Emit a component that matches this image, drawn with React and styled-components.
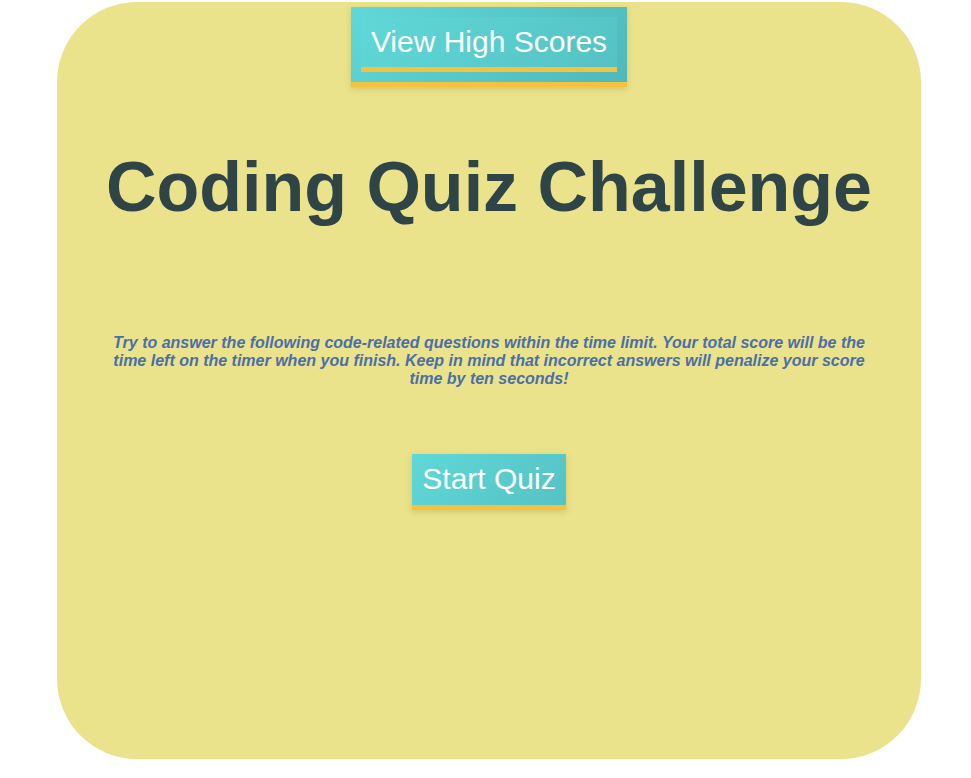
import React from 'react'
import styled, { createGlobalStyle } from 'styled-components'

const GlobalStyle = createGlobalStyle`
  body {
    margin: 0;
    background: #ffffff;
    font-family: "Liberation Sans", Arial, Helvetica, sans-serif;
  }
`

const Card = styled.main`
  width: 864px;
  height: 757px;
  margin: 2px 0 0 57px;
  background: #ebe38b;
  border-radius: 80px;
  display: flex;
  flex-direction: column;
  align-items: center;
  box-sizing: border-box;
  padding-top: 5px;
`

const TealBox = styled.div`
  background: linear-gradient(135deg, #5fd8d8 0%, #4fb8bb 100%);
  border-bottom: 5px solid #f6c13f;
  box-shadow: 0 2px 6px rgba(120, 110, 40, 0.25);
  padding: ${props => props.padding || '0'};
`

const Button = styled.button`
  border: none;
  border-bottom: 5px solid #f6c13f;
  background: linear-gradient(135deg, #5fd8d8 0%, #55c2c4 100%);
  color: #ffffff;
  font-family: "Liberation Sans", Arial, Helvetica, sans-serif;
  font-size: 30px;
  line-height: ${props => (props.tall ? '34px' : '33px')};
  padding: 8px 10px 9px;
  cursor: pointer;
  display: block;
`

const Title = styled.h1`
  margin: 55px 0 0;
  font-size: 70px;
  line-height: 90px;
  font-weight: bold;
  color: #2e4447;
  text-align: center;
`

const Intro = styled.p`
  margin: 102px 0 0;
  width: 760px;
  font-size: 16px;
  line-height: 18px;
  font-style: italic;
  font-weight: bold;
  color: #4a6fa8;
  text-align: center;
`

const StartBox = styled.div`
  margin-top: 66px;
  box-shadow: 0 2px 6px rgba(120, 110, 40, 0.25);
`

export default function App() {
  return (
    <>
      <GlobalStyle />
      <Card>
        <TealBox padding="10px">
          <Button>View High Scores</Button>
        </TealBox>
        <Title>Coding Quiz Challenge</Title>
        <Intro>
          Try to answer the following code-related questions within the time limit. Your total
          score will be the time left on the timer when you finish. Keep in mind that incorrect
          answers will penalize your score time by ten seconds!
        </Intro>
        <StartBox>
          <Button tall>Start Quiz</Button>
        </StartBox>
      </Card>
    </>
  )
}
